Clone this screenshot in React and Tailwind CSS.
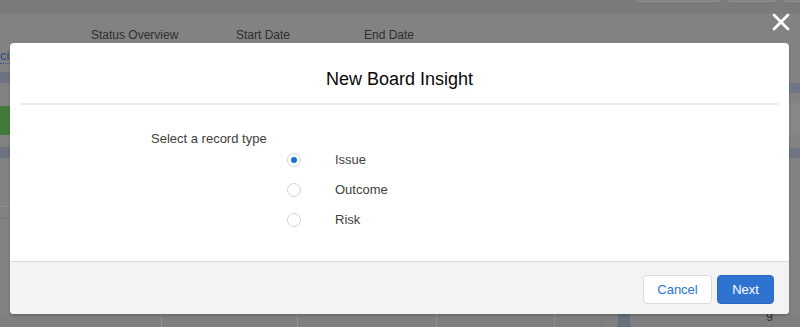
import React from "react";

const font = { fontFamily: '"Liberation Sans", Arial, sans-serif' };

function Radio({ checked }) {
  return (
    <span className="flex h-[14px] w-[14px] items-center justify-center rounded-full border border-[#d4d4d4] bg-white">
      {checked && <span className="h-[6px] w-[6px] rounded-full bg-[#1b6fd6]" />}
    </span>
  );
}

export default function App() {
  const options = [
    { label: "Issue", checked: true },
    { label: "Outcome", checked: false },
    { label: "Risk", checked: false },
  ];
  return (
    <div className="relative flex h-[327px] w-[800px] flex-col overflow-hidden bg-[#828282]" style={font}>
      {/* top bar */}
      <div className="flex h-[14px] items-start justify-end gap-[7px] bg-[#7b7b7b] pr-0">
        <div className="h-[2px] w-[84px] rounded-b-[2px] border-x border-b border-[#8e8e8e] bg-[#858585]" />
        <div className="h-[2px] w-[49px] rounded-b-[2px] border-x border-b border-[#8e8e8e] bg-[#858585]" />
        <div className="h-[2px] w-[17px] rounded-bl-[2px] border-l border-b border-[#8e8e8e] bg-[#858585]" />
      </div>
      {/* column header row */}
      <div className="flex h-[30px] items-start pl-[91px] pt-[13px] text-[12px] leading-[16px] text-[#2f2f2f]">
        <div className="w-[145px]">Status Overview</div>
        <div className="w-[128px]">Start Date</div>
        <div>End Date</div>
      </div>
      {/* body area */}
      <div className="flex flex-1">
        <div className="flex w-[10px] flex-col">
          <div className="mt-[5px] h-[13px] whitespace-nowrap text-[13px] leading-[13px] text-[#284e80]">
            <span className="border-b border-dotted border-[#3a5a8a]">cir</span>
          </div>
          <div className="mt-[10px] h-[11px] bg-[#6d7381]" />
          <div className="h-[23px]" />
          <div className="h-[29px] bg-[#437a3d]" />
          <div className="h-[12px]" />
          <div className="h-[11px] bg-[#6d7381]" />
          <div className="mt-[48px] h-px bg-[#8e8e8e]" />
          <div className="mt-[11px] h-px bg-[#777777]" />
        </div>
        <div className="flex-1" />
        <div className="flex w-[11px] flex-col">
          <div className="mt-[39px] h-[10px] bg-[#6f7585]" />
          <div className="mt-[10px] h-[32px] bg-[#878787]" />
          <div className="mt-[13px] h-[10px] bg-[#6f7585]" />
        </div>
      </div>
      {/* bottom row */}
      <div className="flex h-[13px] bg-[#7f7f7f] text-[12px] leading-[12px] text-[#2f2f2f]">
        <div className="w-[162px] border-r border-[#8f8f8f]" />
        <div className="w-[136px] border-r border-[#8f8f8f]" />
        <div className="w-[139px] border-r border-[#8f8f8f]" />
        <div className="w-[118px] border-r border-[#8f8f8f]" />
        <div className="w-[47px] border-r border-[#7a7a7a]" />
        <div className="w-[16px]" />
        <div className="w-[12px] bg-[#687080]" />
        <div className="flex flex-1 justify-end pr-[27px]">
          <span className="-mt-[6px]">g</span>
        </div>
      </div>

      {/* close icon */}
      <svg className="absolute left-[772px] top-[13px]" width="18" height="18" viewBox="0 0 18 18" fill="none">
        <path d="M2 2L16 16M16 2L2 16" stroke="white" strokeWidth="2.8" strokeLinecap="round" />
      </svg>

      {/* modal */}
      <div className="absolute left-[10px] top-[43px] flex h-[271px] w-[779px] flex-col overflow-hidden rounded-[4px] bg-white shadow-[0_2px_3px_rgba(0,0,0,0.18)]">
        <div className="flex h-[60px] justify-center pt-[24px]">
          <h2 className="text-[18px] leading-[24px] text-[#080707]">New Board Insight</h2>
        </div>
        <div className="mx-[11px] h-[2px] bg-[#e8e8e8]" />
        <div className="flex flex-1 flex-col pl-[141px] pt-[25px] text-[13px] text-[#3e3e3c]">
          <div className="leading-[18px]">Select a record type</div>
          <div className="mt-[2px] flex flex-col gap-[10px] pl-[136px]">
            {options.map((o) => (
              <div key={o.label} className="flex h-[20px] items-center">
                <Radio checked={o.checked} />
                <span className="ml-[34px] leading-[18px]">{o.label}</span>
              </div>
            ))}
          </div>
        </div>
        <div className="flex h-[53px] items-start justify-end gap-[5px] border-t border-[#dcdcdc] bg-[#f3f3f3] pr-[15px] pt-[13px]">
          <button className="flex h-[29px] w-[69px] items-center justify-center rounded-[4px] border border-[#dddbda] bg-white text-[13px] text-[#2a73d6]">
            Cancel
          </button>
          <button className="flex h-[29px] w-[57px] items-center justify-center rounded-[4px] border border-[#2a68c4] bg-[#2f73d1] text-[13px] text-white">
            Next
          </button>
        </div>
      </div>
    </div>
  );
}
